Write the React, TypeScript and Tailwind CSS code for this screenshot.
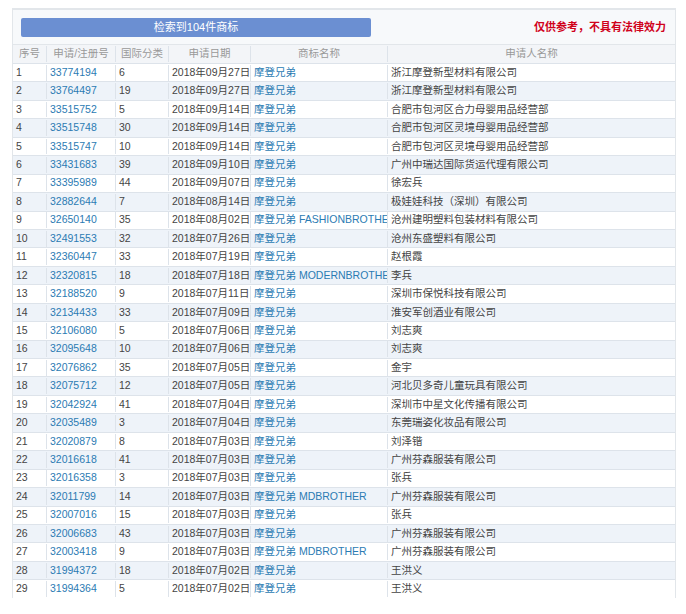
const rows: [string, string, string, string, string][] = [
  ['33774194', '6', '2018年09月27日', '摩登兄弟', '浙江摩登新型材料有限公司'],
  ['33764497', '19', '2018年09月27日', '摩登兄弟', '浙江摩登新型材料有限公司'],
  ['33515752', '5', '2018年09月14日', '摩登兄弟', '合肥市包河区合力母婴用品经营部'],
  ['33515748', '30', '2018年09月14日', '摩登兄弟', '合肥市包河区灵境母婴用品经营部'],
  ['33515747', '10', '2018年09月14日', '摩登兄弟', '合肥市包河区灵境母婴用品经营部'],
  ['33431683', '39', '2018年09月10日', '摩登兄弟', '广州中瑞达国际货运代理有限公司'],
  ['33395989', '44', '2018年09月07日', '摩登兄弟', '徐宏兵'],
  ['32882644', '7', '2018年08月14日', '摩登兄弟', '极娃娃科技（深圳）有限公司'],
  ['32650140', '35', '2018年08月02日', '摩登兄弟 FASHIONBROTHER', '沧州建明塑料包装材料有限公司'],
  ['32491553', '32', '2018年07月26日', '摩登兄弟', '沧州东盛塑料有限公司'],
  ['32360447', '33', '2018年07月19日', '摩登兄弟', '赵根霞'],
  ['32320815', '18', '2018年07月18日', '摩登兄弟 MODERNBROTHER', '李兵'],
  ['32188520', '9', '2018年07月11日', '摩登兄弟', '深圳市保悦科技有限公司'],
  ['32134433', '33', '2018年07月09日', '摩登兄弟', '淮安军创酒业有限公司'],
  ['32106080', '5', '2018年07月06日', '摩登兄弟', '刘志爽'],
  ['32095648', '10', '2018年07月06日', '摩登兄弟', '刘志爽'],
  ['32076862', '35', '2018年07月05日', '摩登兄弟', '金宇'],
  ['32075712', '12', '2018年07月05日', '摩登兄弟', '河北贝多奇儿童玩具有限公司'],
  ['32042924', '41', '2018年07月04日', '摩登兄弟', '深圳市中星文化传播有限公司'],
  ['32035489', '3', '2018年07月04日', '摩登兄弟', '东莞瑞姿化妆品有限公司'],
  ['32020879', '8', '2018年07月03日', '摩登兄弟', '刘泽锴'],
  ['32016618', '41', '2018年07月03日', '摩登兄弟', '广州芬森服装有限公司'],
  ['32016358', '3', '2018年07月03日', '摩登兄弟', '张兵'],
  ['32011799', '14', '2018年07月03日', '摩登兄弟 MDBROTHER', '广州芬森服装有限公司'],
  ['32007016', '15', '2018年07月03日', '摩登兄弟', '张兵'],
  ['32006683', '43', '2018年07月03日', '摩登兄弟', '广州芬森服装有限公司'],
  ['32003418', '9', '2018年07月03日', '摩登兄弟 MDBROTHER', '广州芬森服装有限公司'],
  ['31994372', '18', '2018年07月02日', '摩登兄弟', '王洪义'],
  ['31994364', '5', '2018年07月02日', '摩登兄弟', '王洪义'],
];

const cols = 'grid grid-cols-[34px_69px_53px_82px_137px_1fr]';
const cell = 'border-r border-[#dde3ea] px-[3px] whitespace-nowrap overflow-hidden';

export default function App() {
  return (
    <div className="w-[686px] h-[614px] bg-white pt-[8px] pl-[12px] pr-[10px] text-[10.5px] text-[#444]" style={{ fontFamily: '"Liberation Sans", "Noto Sans CJK SC", sans-serif' }}>
      <div className="border-t-2 border-[#b8bec6] border-l border-r border-[#e2e6ea] bg-[#f7f9fb]">
        <div className="flex items-center justify-between h-[34px] px-[8px]">
          <div className="w-[350px] h-[19px] rounded-[2px] bg-[#6b8fd2] text-white text-[11px] flex items-center justify-center">检索到104件商标</div>
          <div className="text-[#d0021b] font-bold text-[11px] mr-[1px]">仅供参考，不具有法律效力</div>
        </div>
        <div className={`${cols} h-[19px] items-center text-center text-[#999] bg-[#f3f5f8] border-t border-[#e2e6ea]`}>
          <div className={cell}>序号</div>
          <div className={cell}>申请/注册号</div>
          <div className={cell}>国际分类</div>
          <div className={cell}>申请日期</div>
          <div className={cell}>商标名称</div>
          <div className="px-[3px]">申请人名称</div>
        </div>
        {rows.map((r, i) => (
          <div key={i} className={`${cols} h-[18.45px] items-center border-t border-[#dde3ea] ${i % 2 ? 'bg-[#eef3f9]' : 'bg-white'}`}>
            <div className={cell}>{i + 1}</div>
            <div className={`${cell} text-[#2b7bb3]`}>{r[0]}</div>
            <div className={cell}>{r[1]}</div>
            <div className={cell}>{r[2]}</div>
            <div className={`${cell} text-[#2b7bb3]`}>{r[3]}</div>
            <div className="px-[3px] whitespace-nowrap overflow-hidden">{r[4]}</div>
          </div>
        ))}
      </div>
    </div>
  );
}
